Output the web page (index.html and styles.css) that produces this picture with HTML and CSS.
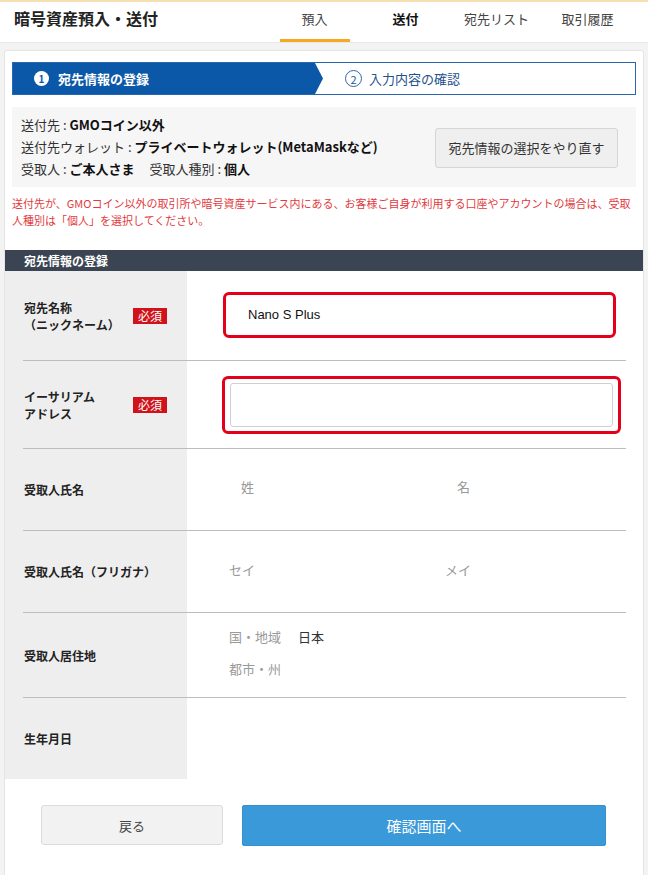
FILE: index.html
```html
<!DOCTYPE html>
<html lang="ja">
<head>
  <meta charset="UTF-8" />
  <meta name="viewport" content="width=device-width, initial-scale=1.0" />
  <title>暗号資産預入・送付</title>
  <link rel="stylesheet" href="styles.css">
</head>
<body>
  <header class="top-bar">
    <h1 class="page-title">暗号資産預入・送付</h1>
    <nav class="tabs">
      <a class="tab active">預入</a>
      <a class="tab current">送付</a>
      <a class="tab">宛先リスト</a>
      <a class="tab">取引履歴</a>
    </nav>
  </header>

  <main class="card">
    <div class="card-inner">
      <div class="stepper">
        <div class="step step-on"><span class="num">1</span>宛先情報の登録</div>
        <div class="step step-off"><span class="num">2</span>入力内容の確認</div>
      </div>

      <div class="summary">
        <div class="summary-text">
          <p>送付先 : <b>GMOコイン以外</b></p>
          <p>送付先ウォレット : <b>プライベートウォレット(MetaMaskなど)</b></p>
          <p>受取人 : <b>ご本人さま</b><span class="spacer"></span>受取人種別 : <b>個人</b></p>
        </div>
        <button class="redo-btn">宛先情報の選択をやり直す</button>
      </div>

      <p class="note">送付先が、GMOコイン以外の取引所や暗号資産サービス内にある、お客様ご自身が利用する口座やアカウントの場合は、受取人種別は「個人」を選択してください。</p>
    </div>

    <h2 class="section-head">宛先情報の登録</h2>

    <div class="form">
      <div class="row row-name">
        <div class="label"><span class="with-badge">宛先名称<br>（ニックネーム）</span><em class="req">必須</em></div>
        <div class="field">
          <div class="input-red plain">Nano S Plus</div>
        </div>
      </div>
      <div class="row row-addr">
        <div class="label"><span class="with-badge">イーサリアム<br>アドレス</span><em class="req">必須</em></div>
        <div class="field">
          <div class="input-red boxed"><div class="inner-input"></div></div>
        </div>
      </div>
      <div class="row row-plain">
        <div class="label"><span>受取人氏名</span></div>
        <div class="field pair pair-kanji"><span>姓</span><span>名</span></div>
      </div>
      <div class="row row-plain">
        <div class="label"><span>受取人氏名（フリガナ）</span></div>
        <div class="field pair"><span>セイ</span><span>メイ</span></div>
      </div>
      <div class="row row-home">
        <div class="label"><span>受取人居住地</span></div>
        <div class="field stack">
          <p><span class="muted">国・地域</span><span class="value">日本</span></p>
          <p><span class="muted">都市・州</span></p>
        </div>
      </div>
      <div class="row row-last">
        <div class="label"><span>生年月日</span></div>
        <div class="field"></div>
      </div>
    </div>

    <div class="actions">
      <button class="btn-back">戻る</button>
      <button class="btn-next">確認画面へ</button>
    </div>
  </main>
</body>
</html>
```

FILE: styles.css
```css
body {
  margin: 0;
  background: #f3f3f3;
  font-family: "Noto Sans CJK JP", "Noto Sans", sans-serif;
  color: #222;
}

p { margin: 0; }

.top-bar {
  height: 40px;
  background: #fff;
  border-top: 2px solid #f6dfb2;
  border-bottom: 1px solid #e8e8e8;
  display: flex;
  align-items: center;
}

.page-title {
  margin: 0 0 0 14px;
  font-size: 16px;
  font-weight: bold;
  color: #222;
  flex: 1;
  line-height: 1;
  padding-bottom: 8px;
}

.tabs {
  display: flex;
  height: 100%;
  margin-right: 15px;
}

.tab {
  width: 91px;
  display: flex;
  justify-content: center;
  align-items: center;
  font-size: 13px;
  color: #444;
  position: relative;
  padding-bottom: 8px;
  box-sizing: border-box;
}

.tab.current {
  font-weight: bold;
  color: #111;
}

.tab.active::after {
  content: "";
  position: absolute;
  left: 11px;
  right: 10px;
  bottom: 0;
  height: 3px;
  background: #f5a820;
}

.card {
  margin: 7px 4px 0;
  background: #fff;
  border: 1px solid #e4e4e4;
  border-radius: 3px;
  padding-bottom: 30px;
}

.card-inner {
  padding: 11px 7px 0;
}

.stepper {
  display: flex;
  height: 31px;
  border: 1px solid #2a66b0;
}

.step {
  display: flex;
  align-items: center;
  font-size: 13px;
}

.step-on {
  width: 310px;
  background: #0b58a8;
  color: #fff;
  font-weight: bold;
  padding-left: 21px;
  box-sizing: border-box;
  clip-path: polygon(0 0, 302px 0, 100% 50%, 302px 100%, 0 100%);
}

.step-off {
  color: #23518d;
  padding-left: 22px;
}

.num {
  width: 15px;
  height: 15px;
  border-radius: 50%;
  font-size: 10px;
  display: inline-flex;
  justify-content: center;
  align-items: center;
  margin-right: 9px;
  box-sizing: border-box;
}

.step-on .num {
  background: #fff;
  color: #0b58a8;
}

.step-off .num {
  width: 17px;
  height: 17px;
  border: 1.5px solid #2a66b0;
  color: #23518d;
  font-size: 11px;
  margin-right: 7px;
}

.summary {
  margin-top: 12px;
  background: #f6f6f6;
  height: 80px;
  display: flex;
  align-items: center;
  padding: 0 18px 0 9px;
}

.summary-text {
  flex: 1;
  font-size: 13px;
  line-height: 22px;
  color: #333;
}

.summary-text b {
  color: #111;
}

.spacer {
  display: inline-block;
  width: 15px;
}

.redo-btn {
  width: 183px;
  height: 40px;
  background: #efefef;
  border: 1px solid #d6d6d6;
  border-radius: 3px;
  font-family: inherit;
  font-size: 13px;
  color: #333;
  margin-top: 1px;
}

.note {
  margin-top: 8px;
  font-size: 11px;
  line-height: 17px;
  color: #e23a40;
  padding-bottom: 21px;
}

.section-head {
  margin: 0;
  height: 21px;
  background: #3b4452;
  color: #fff;
  font-size: 12px;
  font-weight: bold;
  line-height: 21px;
  padding-left: 19px;
}

.form {
  background: linear-gradient(to right, #eeeeee 182px, #fff 182px);
  padding: 0 17px 0 18px;
}

.row {
  display: flex;
  border-bottom: 1px solid #bdbdbd;
}

.row-name { height: 89px; }
.row-addr { height: 87px; }
.row-plain { height: 81px; }
.row-home { height: 84px; }
.row-last { height: 81px; border-bottom: none; }

.label {
  width: 164px;
  flex-shrink: 0;
  display: flex;
  align-items: center;
  font-size: 12px;
  font-weight: bold;
  line-height: 17px;
  color: #222;
  padding-left: 1px;
  box-sizing: border-box;
  white-space: nowrap;
}

.with-badge {
  width: 109px;
}

.req {
  font-style: normal;
  font-weight: normal;
  background: #d0121b;
  color: #fff;
  font-size: 12px;
  line-height: 16px;
  padding: 0 5px;
}

.field {
  flex: 1;
  display: flex;
  align-items: center;
}

.input-red {
  border: 3px solid #e4001b;
  border-radius: 6px;
  box-sizing: border-box;
}

.plain {
  margin: 0 10px 2px 36px;
  flex: 1;
  height: 46px;
  display: flex;
  align-items: center;
  padding-left: 22px;
  font-family: "Liberation Sans", Arial, sans-serif;
  font-size: 13px;
  color: #111;
}

.boxed {
  margin: 1px 5px 0 35px;
  flex: 1;
  height: 58px;
  padding: 4px 5px;
}

.inner-input {
  height: 100%;
  border: 1px solid #cfcfcf;
  border-radius: 3px;
  box-sizing: border-box;
}

.pair {
  font-size: 13px;
  color: #999;
  padding-left: 42px;
  padding-bottom: 4px;
}

.pair span {
  width: 216px;
}

.pair-kanji {
  padding-left: 54px;
  padding-bottom: 6px;
}

.stack {
  flex-direction: column;
  align-items: flex-start;
  justify-content: center;
  padding-left: 42px;
  font-size: 13px;
  gap: 13px;
  padding-bottom: 6px;
}

.muted {
  color: #999;
}

.value {
  color: #333;
  margin-left: 17px;
}

.actions {
  display: flex;
  gap: 19px;
  margin-top: 26px;
  padding-left: 36px;
}

.btn-back {
  width: 182px;
  height: 40px;
  background: #f2f2f2;
  border: 1px solid #dcdcdc;
  border-radius: 3px;
  font-family: inherit;
  font-size: 13px;
  color: #444;
}

.btn-next {
  width: 364px;
  height: 41px;
  background: #3a9ad9;
  border: 1px solid #3590d0;
  border-radius: 2px;
  font-family: inherit;
  font-size: 15px;
  color: #fff;
}
```
